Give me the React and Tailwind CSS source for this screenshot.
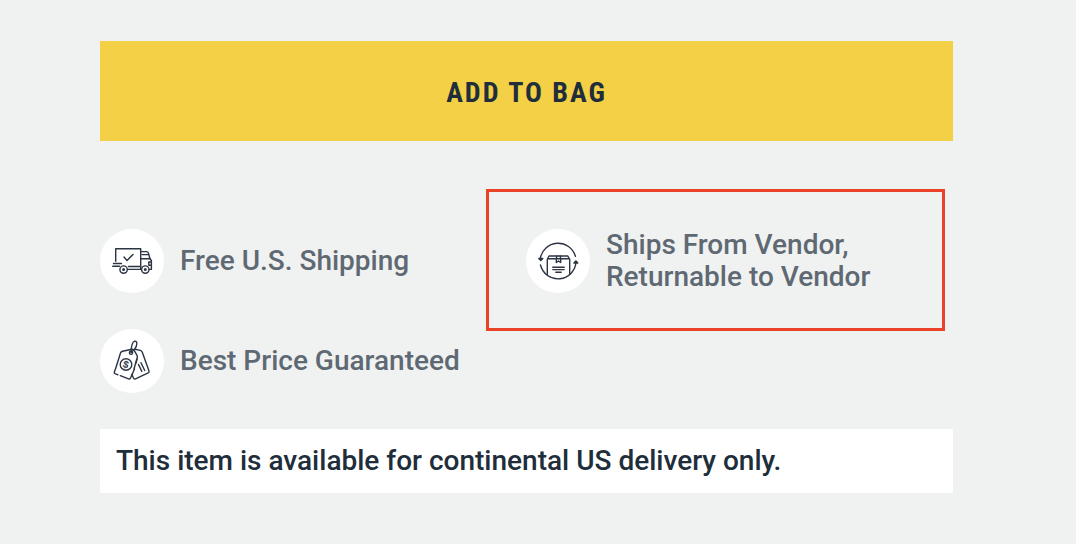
function IconBadge({ children }) {
  return (
    <span className="size-16 shrink-0 rounded-full bg-white">
      <svg
        viewBox="0 1 64 64"
        className="size-16"
        fill="none"
        stroke="#2b3442"
        strokeWidth="1.4"
        strokeLinecap="round"
        strokeLinejoin="round"
        aria-hidden="true"
      >
        {children}
      </svg>
    </span>
  );
}

function TruckIcon() {
  return (
    <IconBadge>
      <path d="M15.7 33.2V20.7H40.7V38.5H28.5" />
      <path d="M13.5 35.5H21.5M12.7 38.3H19.5" />
      <path d="M24 29L27 32.6L33 26.4" />
      <path d="M40.7 23.6H46.5Q48 23.6 48.5 25.4L50 30.8H40.7M42 26.6H48.5" />
      <path d="M50 30.8L51.4 32.5V41.4H49.5M51.4 34H48.8V37.2H51.4M40.7 38.5V41.4" />
      <circle cx="23.6" cy="41.6" r="3.7" />
      <circle cx="23.6" cy="41.6" r="0.8" />
      <circle cx="45.3" cy="41.6" r="3.7" />
      <circle cx="45.3" cy="41.6" r="0.8" />
      <path d="M27.5 41.4H41.3" />
    </IconBadge>
  );
}

function TagsIcon() {
  return (
    <IconBadge>
      <path d="M15.8 40L14.3 44.3Q14 45.2 15 45.7L18 46.8M20.3 47.7L28.5 50.8Q30 51.3 30.5 50L34.5 41M36 35L37.2 30.5Q37.6 28.7 36.9 27.2L34.3 22.6Q33.5 21 32 21.2L22.5 23.2Q21 23.6 20.5 25L15.8 40" />
      <path d="M35 21.3L40.3 22.4Q41.6 22.7 42.2 24L49 43Q49.4 44.4 48.2 44.9L35.5 50.8Q34 51.3 33.4 50L31.9 46.5M36.8 31L34 41" />
      <circle cx="31" cy="24.8" r="1.6" />
      <path d="M31 24.5C31.2 19 32 14 34.6 13.2C37.8 12.6 37.2 17.8 34.8 20.8C33.8 22.2 32.2 23.5 31 24.5" />
      <circle cx="26" cy="36.5" r="5.8" />
      <path d="M38.5 36.5L41.8 43.4M41 34.7L44.7 42.5" />
      <text
        x="26"
        y="40"
        textAnchor="middle"
        transform="rotate(16 26 36.5)"
        className="font-['Liberation_Sans',sans-serif] text-[10px] font-bold"
        fill="#2b3442"
        stroke="none"
      >
        $
      </text>
    </IconBadge>
  );
}

function ReturnBoxIcon() {
  return (
    <IconBadge>
      <path d="M14.3 30.5A18 18 0 0 1 49.4 28.3" />
      <path d="M14.5 37A18 18 0 0 0 50 33.5" />
      <path d="M12.8 30.4L14.8 32.4L16.8 30.4ZM47.9 35L49.9 33L51.8 35Z" fill="#2b3442" />
      <path d="M21.3 46.4V31.3L23 28H41.8L43.7 31.3V46.4M21.8 30.8H43.5" />
      <path d="M30.8 28L30.3 30.8V34.5L32.5 33L34.7 34.5V30.8L34.2 28" />
      <path d="M26.8 39.2H38.2M26.8 41.6H38.2M29.8 44.3H35.2" />
    </IconBadge>
  );
}

function Feature({ icon, children, highlighted = false }) {
  return (
    <li className="relative flex items-center gap-4">
      {icon}
      <span>{children}</span>
      {highlighted ? (
        <span className="pointer-events-none absolute -top-10 right-2 -bottom-[38px] -left-10 border-3 border-[#eb4129]" />
      ) : null}
    </li>
  );
}

export default function App() {
  return (
    <main className="min-h-screen bg-[#f0f2f1] pt-[41px] pr-[123px] pb-12 pl-[100px] font-['Roboto','Liberation_Sans',sans-serif] text-[28px] leading-8 font-medium">
      <button
        type="button"
        className="w-full bg-[#f4d046] pt-9 pb-8 font-['Roboto_Condensed','Roboto',sans-serif] font-bold tracking-[2px] text-[#202d3a]"
      >
        ADD TO BAG
      </button>
      <ul className="mt-[88px] grid grid-cols-[1fr_427px] gap-y-9 text-[#5f6973]">
        <Feature icon={<TruckIcon />}>Free U.S. Shipping</Feature>
        <Feature icon={<ReturnBoxIcon />} highlighted>
          Ships From Vendor,
          <br />
          Returnable to Vendor
        </Feature>
        <Feature icon={<TagsIcon />}>Best Price Guaranteed</Feature>
      </ul>
      <p className="mt-9 bg-white p-4 text-[#202d3a]">
        This item is available for continental US delivery only.
      </p>
    </main>
  );
}
